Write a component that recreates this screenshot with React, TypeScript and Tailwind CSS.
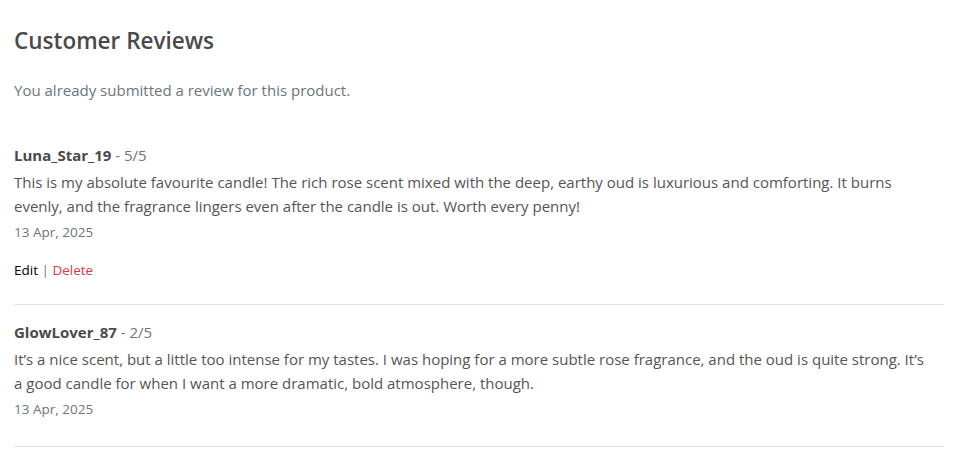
import React from 'react';

interface Review {
  id: number;
  user: string;
  rating: number;
  comment: string;
  date: string;
  mine?: boolean;
}

const reviews: Review[] = [
  {
    id: 1,
    user: 'Luna_Star_19',
    rating: 5,
    comment:
      'This is my absolute favourite candle! The rich rose scent mixed with the deep, earthy oud is luxurious and comforting. It burns evenly, and the fragrance lingers even after the candle is out. Worth every penny!',
    date: '13 Apr, 2025',
    mine: true,
  },
  {
    id: 2,
    user: 'GlowLover_87',
    rating: 2,
    comment:
      'It\u2019s a nice scent, but a little too intense for my tastes. I was hoping for a more subtle rose fragrance, and the oud is quite strong. It\u2019s a good candle for when I want a more dramatic, bold atmosphere, though.',
    date: '13 Apr, 2025',
  },
];

const ReviewItem = ({ review }: { review: Review }) => {
  return (
    <div className="border-b border-[#dee2e6] pt-[15px] pb-[26px]">
      <p className="text-[15px] leading-[24px]">
        <span className="font-bold text-[#4a4a4a]">{review.user}</span>
        <span className="text-[#6c757d]"> - {review.rating}/5</span>
      </p>
      <p className="mt-[3px] max-w-[918px] text-[15px] leading-[24px] text-[#555]">{review.comment}</p>
      <p className="mt-[4px] text-[13.5px] leading-[21px] text-[#6c757d]">{review.date}</p>
      {review.mine && (
        <div className="mt-[17px] -mb-[3px] text-[13.5px] leading-[21px] text-black">
          <button className="cursor-pointer">Edit</button>
          <span className="text-[#6c757d]"> | </span>
          <button className="cursor-pointer text-[#dc3545]">Delete</button>
        </div>
      )}
    </div>
  );
};

const App = () => {
  return (
    <div
      className="min-h-screen bg-white px-[14px] pt-[26px]"
      style={{ fontFamily: '"Segoe UI", "Open Sans", "Noto Sans", sans-serif' }}
    >
      <div className="w-[930px]">
        <h2 className="text-[22.5px] leading-[29px] font-semibold text-[#4a4a4a]">Customer Reviews</h2>
        <p className="mt-[23px] mb-[26px] text-[15px] leading-[24px] text-[#6c757d]">
          You already submitted a review for this product.
        </p>
        {reviews.map((r) => (
          <ReviewItem key={r.id} review={r} />
        ))}
      </div>
    </div>
  );
};

export default App;
